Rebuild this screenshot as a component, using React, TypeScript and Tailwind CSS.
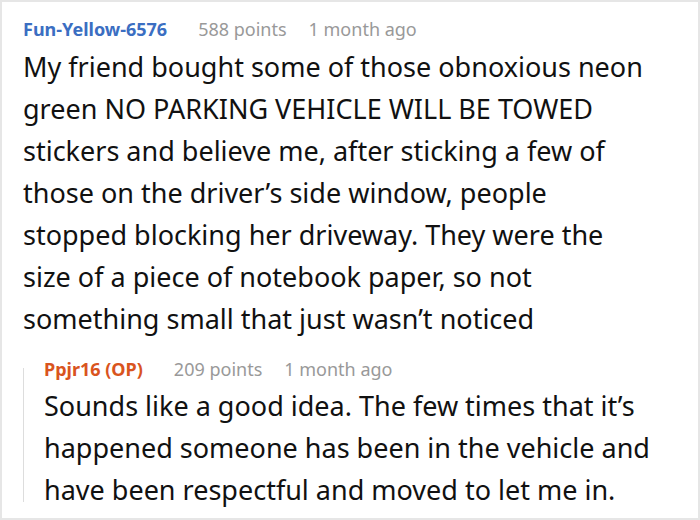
export default function App() {
  return (
    <div className="h-[520px] w-[700px] overflow-hidden border-2 border-[#e6e6e6] bg-white font-['Noto_Sans',sans-serif]">
      <div className="pl-[21px] pr-[46px] pt-[15px]">
        <div className="flex items-baseline text-[18px] leading-[24px]">
          <span className="font-bold text-[#3b6ec2]">Fun-Yellow-6576</span>
          <span className="ml-[31px] text-[#999999]">588 points</span>
          <span className="ml-[22px] text-[#999999]">1 month ago</span>
        </div>
        <p className="mt-[5px] text-[27px] leading-[42px] text-[#111111]">
          My friend bought some of those obnoxious neon green NO PARKING VEHICLE WILL BE TOWED stickers and believe me, after sticking a few of those on the driver’s side window, people stopped blocking her driveway. They were the size of a piece of notebook paper, so not something small that just wasn’t noticed
        </p>
        <div className="-mr-[30px] mt-[17px] flex">
          <div className="mb-[9px] mt-[11px] w-px shrink-0 bg-[#dddddd]" />
          <div className="pl-[20px]">
            <div className="flex items-baseline text-[18px] leading-[24px]">
              <span className="font-bold text-[#d9541e]">Ppjr16 (OP)</span>
              <span className="ml-[31px] text-[#999999]">209 points</span>
              <span className="ml-[22px] text-[#999999]">1 month ago</span>
            </div>
            <p className="mt-[4px] text-[27px] leading-[42px] text-[#111111]">
              Sounds like a good idea. The few times that it’s happened someone has been in the vehicle and have been respectful and moved to let me in.
            </p>
          </div>
        </div>
      </div>
    </div>
  );
}
